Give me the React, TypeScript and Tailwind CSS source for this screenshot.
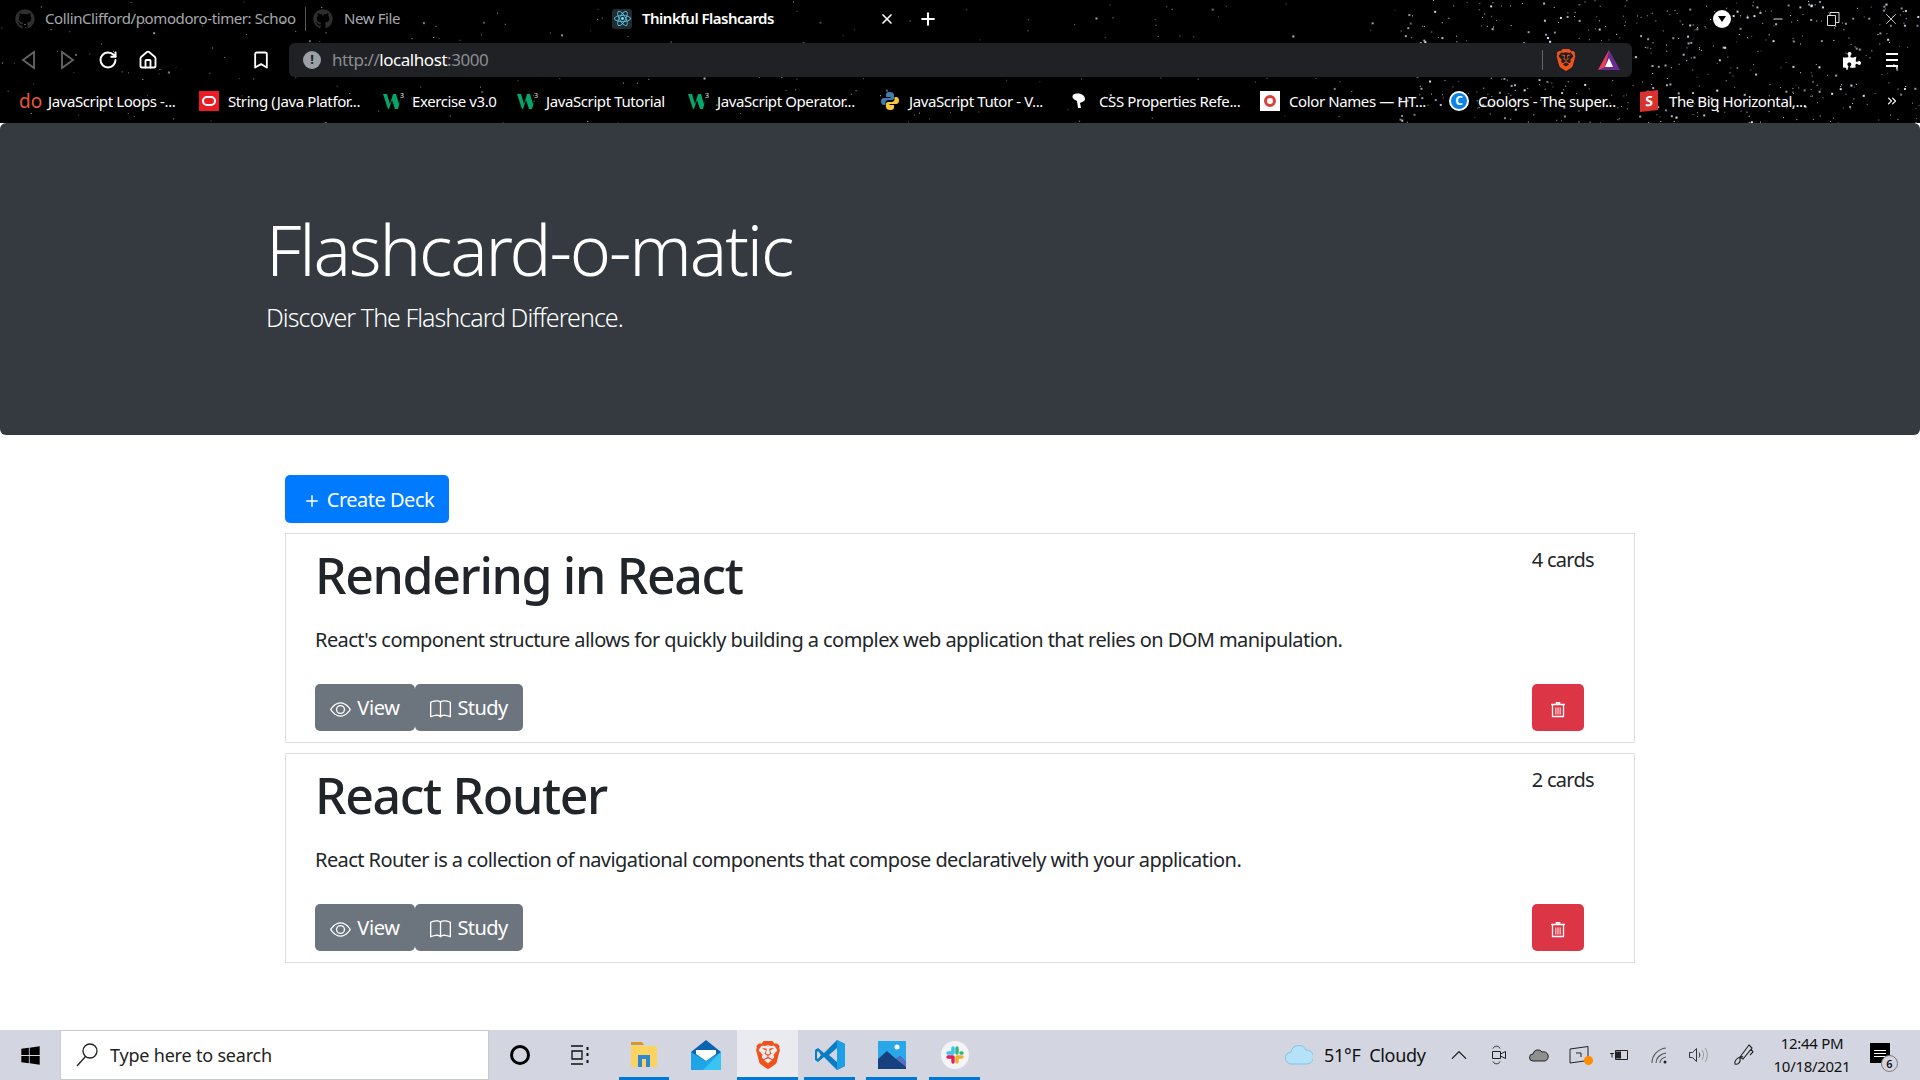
import { type ReactNode } from "react"
import { BsBook, BsEye, BsPlus, BsChevronUp } from "react-icons/bs"
import { FaGithub, FaReact, FaWindows, FaPuzzlePiece } from "react-icons/fa"
import { SiBrave } from "react-icons/si"
import { X, Plus, RotateCw, Home, Bookmark, Minus, ChevronsRight } from "lucide-react"

const FONT = "font-['Noto_Sans','Open_Sans',sans-serif]"

// 星空背景用的伪随机
function makeStars() {
  const out: { x: number; y: number; s: number; o: number }[] = []
  let seed = 1337
  const rnd = () => {
    seed = (seed * 16807) % 2147483647
    return seed / 2147483647
  }
  for (let i = 0; i < 760; i++) {
    // 右上角更密
    const dense = i % 5 < 3
    const x = dense ? 1400 + rnd() * 520 : rnd() * 1920
    const y = rnd() * 123
    out.push({ x, y, s: rnd() > (dense ? 0.65 : 0.85) ? 2 : 1, o: dense ? 0.5 + rnd() * 0.5 : 0.3 + rnd() * 0.5 })
  }
  return out
}
const STARS = makeStars()

function Stars() {
  return (
    <svg className="absolute inset-0 w-full h-full" viewBox="0 0 1920 123">
      {STARS.map((s, i) => (
        <rect key={i} x={s.x} y={s.y} width={s.s} height={s.s} fill="#e6edff" opacity={s.o} />
      ))}
    </svg>
  )
}

function BraveIcon({ size = 22 }: { size?: number }) {
  return (
    <span className="text-[#f1511b] flex">
      <SiBrave size={size} />
    </span>
  )
}

function W3Icon() {
  return (
    <svg width="22" height="18" viewBox="0 0 22 18">
      <path d="M0 2h4l3 10 3-10h3l3 10 3-10h0l-4 15h-3l-3-9-3 9H5z" fill="#04a66b" />
      <text x="17" y="6" fontSize="7" fill="#e5e7eb">3</text>
    </svg>
  )
}

function PythonIcon() {
  return (
    <svg width="20" height="20" viewBox="0 0 20 20">
      <path d="M10 1c-4 0-4 1.600-4 3v2h4.500v1H4c-2 0-3 1.500-3 3.500S2 14 4 14h1.500v-2.200C5.500 10 7 9 8.500 9h3.500c1.300 0 2-.8 2-2V4c0-2-2-3-4-3z" fill="#3f7cb0" />
      <path d="M10 19c4 0 4-1.600 4-3v-2H9.500v-1H16c2 0 3-1.500 3-3.500S18 6 16 6h-1.500v2.200C14.500 10 13 11 11.500 11H8c-1.300 0-2 .8-2 2v3c0 2 2 3 4 3z" fill="#f7c83c" />
    </svg>
  )
}

function Bm({ icon, label, cls }: { icon: ReactNode; label: string; cls: string }) {
  return (
    <div className={`flex items-center shrink-0 ${cls}`}>
      <span className="w-[29px] flex items-center shrink-0">{icon}</span>
      <span className="text-white text-[15px] tracking-[-0.4px] whitespace-nowrap">{label}</span>
    </div>
  )
}

function BrowserChrome() {
  return (
    <div className={`relative bg-black h-[123px] shrink-0 overflow-hidden ${FONT}`}>
      <Stars />
      <div className="relative flex flex-col h-full">
        {/* 标签栏 */}
        <div className="flex items-center h-[37px] pl-[15px] shrink-0">
          <FaGithub size={20} className="text-[#2e2e2e] shrink-0" />
          <span className="ml-[10px] w-[250px] whitespace-nowrap text-[15px] tracking-[-0.4px] text-[#a6a9ad]">
            CollinClifford/pomodoro-timer: Schoo
          </span>
          <div className="w-px h-[24px] bg-[#555] ml-[10px]" />
          <FaGithub size={20} className="text-[#2e2e2e] ml-[7px] shrink-0" />
          <span className="ml-[11px] w-[268px] text-[15px] tracking-[-0.4px] text-[#a6a9ad]">New File</span>
          <span className="w-[20px] h-[20px] rounded-[3px] bg-[#222b2f] flex items-center justify-center shrink-0">
            <FaReact size={17} className="text-[#61dafb]" />
          </span>
          <span className="ml-[10px] w-[237px] text-[15px] tracking-[-0.5px] font-semibold text-white whitespace-nowrap">
            Thinkful Flashcards
          </span>
          <X size={16} strokeWidth={2.5} className="text-white shrink-0" />
          <Plus size={20} strokeWidth={2.5} className="ml-[23px] text-white shrink-0" />
          <div className="flex-1" />
          <span className="w-[18px] h-[18px] rounded-full bg-white flex items-center justify-center">
            <span className="w-0 h-0 border-l-[4px] border-r-[4px] border-t-[6px] border-l-transparent border-r-transparent border-t-black" />
          </span>
          <Minus size={14} className="ml-[40px] text-[#ddd]" />
          <svg className="ml-[41px]" width="14" height="14" viewBox="0 0 14 14" fill="none" stroke="#ddd">
            <path d="M1.500 3.500h8v10h-8zM4 3.500V.5h9v10H9.500" />
          </svg>
          <X size={18} strokeWidth={1.2} className="ml-[42px] mr-[20px] text-[#ddd]" />
        </div>

        {/* 地址栏 */}
        <div className="flex items-center h-[43px] mt-[1px] shrink-0">
          <svg className="ml-[20px]" width="16" height="20" viewBox="0 0 16 20" fill="none" stroke="#666" strokeWidth="1.800">
            <path d="M14 2 3 10l11 8z" />
          </svg>
          <svg className="ml-[24px]" width="16" height="20" viewBox="0 0 16 20" fill="none" stroke="#666" strokeWidth="1.800">
            <path d="M2 2l11 8-11 8z" />
          </svg>
          <RotateCw size={20} strokeWidth={2.4} className="ml-[22px] text-white" />
          <Home size={20} strokeWidth={2.2} className="ml-[20px] text-white" />
          <Bookmark size={20} strokeWidth={2.2} className="ml-[93px] text-white" />
          <div className="ml-[18px] w-[1343px] h-[34px] rounded-[6px] bg-[#202124] flex items-center pl-[14px] pr-[11px]">
            <span className="w-[18px] h-[18px] rounded-full bg-[#9aa0a6] text-[#202124] text-[13px] font-bold flex items-center justify-center leading-none">
              !
            </span>
            <span className="ml-[11px] text-[17px] tracking-[-0.45px] text-[#8a8d91]">
              http://<span className="text-white">localhost</span>:3000
            </span>
            <div className="flex-1" />
            <div className="w-px h-[20px] bg-[#666]" />
            <span className="ml-[12px] flex">
              <BraveIcon />
            </span>
            <svg className="ml-[20px]" width="24" height="22" viewBox="0 0 24 22">
              <path d="M12 1 23 21H1z" fill="#6b2c91" />
              <path d="M12 1 1 21l7-3z" fill="#ef3e4f" />
              <path d="M12 9l4 9H8z" fill="#fff" />
            </svg>
          </div>
          <FaPuzzlePiece size={18} className="ml-[211px] text-white" />
          <svg className="ml-[24px]" width="14" height="18" viewBox="0 0 14 18" fill="#fff">
            <rect x="1" y="2" width="12" height="2" />
            <rect x="1" y="8" width="12" height="2" />
            <rect x="1" y="14" width="12" height="2" />
          </svg>
        </div>

        {/* 书签栏 */}
        <div className="flex items-center h-[40px] pl-[19px] shrink-0">
          <Bm cls="w-[180px]" label="JavaScript Loops -..." icon={<span className="text-[#e9573f] text-[19px] leading-none">do</span>} />
          <Bm
            cls="w-[184px]"
            label="String (Java Platfor..."
            icon={
              <span className="w-[20px] h-[20px] bg-[#ec1c24] flex items-center justify-center">
                <span className="w-[14px] h-[10px] rounded-[5px] border-2 border-white" />
              </span>
            }
          />
          <Bm cls="w-[134px]" label="Exercise v3.0" icon={<W3Icon />} />
          <Bm cls="w-[171px]" label="JavaScript Tutorial" icon={<W3Icon />} />
          <Bm cls="w-[192px]" label="JavaScript Operator..." icon={<W3Icon />} />
          <Bm cls="w-[190px]" label="JavaScript Tutor - V..." icon={<PythonIcon />} />
          <Bm
            cls="w-[190px]"
            label="CSS Properties Refe..."
            icon={
              <svg width="18" height="18" viewBox="0 0 18 18">
                <path d="M3 3c4-3 12-1 12 4 0 3-4 3-5 4l1 5H8L7 9C5 8 1 6 3 3z" fill="#fff" />
              </svg>
            }
          />
          <Bm
            cls="w-[189px]"
            label="Color Names — HT..."
            icon={
              <span className="w-[20px] h-[20px] bg-white flex items-center justify-center">
                <span className="w-[12px] h-[12px] rounded-full border-[3px] border-[#d8423a]" />
              </span>
            }
          />
          <Bm
            cls="w-[191px]"
            label="Coolors - The super..."
            icon={
              <span className="w-[20px] h-[20px] rounded-full bg-[#0a84e8] border-2 border-white flex items-center justify-center text-white text-[12px] font-bold leading-none">
                C
              </span>
            }
          />
          <Bm
            cls="w-[245px]"
            label="The Big Horizontal,..."
            icon={
              <span className="w-[18px] h-[20px] bg-[#d9322e] -skew-y-6 flex items-center justify-center text-white text-[14px] font-bold leading-none">
                S
              </span>
            }
          />
          <ChevronsRight size={14} className="text-white shrink-0" />
        </div>
      </div>
    </div>
  )
}

function TrashIcon() {
  return (
    <svg width="20" height="20" viewBox="0 0 20 20" fill="none" stroke="#fff" strokeWidth="1.300">
      <path d="M3 5.500h14M8.500 5V3.800h3V5" strokeWidth="1.600" />
      <path d="M4.500 6v11.500h11V6" />
      <path d="M7.800 8.500v7M10 8.500v7M12.200 8.500v7" strokeOpacity=".75" />
    </svg>
  )
}

function DeckCard({ title, desc, count }: { title: string; desc: string; count: string }) {
  return (
    <div className="h-[210px] border border-[#dfdfdf] pl-[29px] pr-[50px] flex flex-col">
      <div className="flex justify-between">
        <h2 className="text-[50px] leading-[60px] font-medium text-[#212529] mt-[11px] tracking-[-1.35px]">{title}</h2>
        <span className="text-[20px] leading-[30px] text-[#212529] mt-[11px] mr-[-10px] tracking-[-0.7px]">{count}</span>
      </div>
      <p className="text-[20px] leading-[30px] text-[#212529] mt-[20px] tracking-[-0.56px]">{desc}</p>
      <div className="flex justify-between mt-[29px]">
        <div className="flex">
          <button className="h-[47px] w-[100px] rounded-[5px] bg-[#6c757d] text-white text-[20px] flex items-center justify-center gap-[6px] tracking-[-0.3px] pt-[1px]">
            <BsEye size={21} className="mt-[3px]" />
            View
          </button>
          <button className="h-[47px] w-[108px] rounded-[5px] bg-[#6c757d] text-white text-[20px] flex items-center justify-center gap-[6px] tracking-[-0.6px] pt-[1px]">
            <BsBook size={21} className="mt-[3px]" />
            Study
          </button>
        </div>
        <button className="h-[47px] w-[52px] rounded-[5px] bg-[#dc3545] flex items-center justify-center pt-[2px]">
          <TrashIcon />
        </button>
      </div>
    </div>
  )
}

function Page() {
  return (
    <div className={`flex-1 min-h-0 bg-white ${FONT}`}>
      <div className="h-[312px] rounded-[6px] bg-[#343a40] pt-[84px] pl-[266px] text-white">
        <h1 className="text-[70px] leading-[84px] font-light tracking-[-2.15px]">Flashcard-o-matic</h1>
        <p className="text-[25px] leading-[37px] font-light mt-[8px] tracking-[-0.95px]">Discover The Flashcard Difference.</p>
      </div>
      <div className="w-[1350px] ml-[285px] mt-[40px]">
        <button className="h-[48px] w-[164px] rounded-[5px] bg-[#007bff] text-white text-[20px] flex items-center justify-center tracking-[-0.5px] pt-[1px]">
          <BsPlus size={24} className="mt-[3px] mr-[3px]" />
          Create Deck
        </button>
        <div className="mt-[10px] flex flex-col gap-[10px]">
          <DeckCard
            title="Rendering in React"
            count="4 cards"
            desc="React's component structure allows for quickly building a complex web application that relies on DOM manipulation."
          />
          <DeckCard
            title="React Router"
            count="2 cards"
            desc="React Router is a collection of navigational components that compose declaratively with your application."
          />
        </div>
      </div>
    </div>
  )
}

function TaskSlot({ cls, active, line, children }: { cls: string; active?: boolean; line?: boolean; children: ReactNode }) {
  return (
    <div className={`h-full flex items-center justify-center relative shrink-0 ${cls} ${active ? "bg-[#eaebf1]" : ""}`}>
      {children}
      {line && <span className="absolute left-0 right-0 bottom-0 h-[3px] bg-[#0078d7]" />}
    </div>
  )
}

function Taskbar() {
  return (
    <div className={`h-[50px] shrink-0 bg-[#d3d6e1] flex items-center ${FONT}`}>
      <div className="w-[60px] flex justify-center">
        <FaWindows size={21} className="text-black" />
      </div>
      <div className="w-[429px] h-full bg-white border border-[#c9cad0] flex items-center pl-[14px] text-[#222]">
        <svg width="24" height="26" viewBox="0 0 24 26" fill="none" stroke="#222" strokeWidth="1.300">
          <circle cx="15" cy="9" r="7" />
          <path d="M10.500 14.500 2 24" />
        </svg>
        <span className="ml-[11px] text-[18px] tracking-[-0.2px]">Type here to search</span>
      </div>
      <div className="w-[62px] flex justify-center">
        <span className="w-[20px] h-[20px] rounded-full border-[3px] border-black" />
      </div>
      <div className="w-[58px] flex justify-center">
        <svg width="22" height="20" viewBox="0 0 22 20" fill="none" stroke="#111" strokeWidth="1.300">
          <path d="M2 1h12M3 6h10v8H3zM2 19h12" />
          <path d="M18.500 2v3M18.500 8v3M18.500 15v3" strokeWidth="2" />
        </svg>
      </div>
      <div className="w-[10px]" />
      <TaskSlot cls="w-[50px]" line>
        <svg width="28" height="28" viewBox="0 0 28 28">
          <path d="M1 1h11l2 3H1z" fill="#d99a1c" />
          <path d="M1 5h26v21H1z" fill="#fbd35f" />
          <path d="M8 26V14h12v12h-4v-8h-4v8z" fill="#2d87d4" />
        </svg>
      </TaskSlot>
      <div className="w-[21px]" />
      <div className="w-[32px] flex justify-center">
        <svg width="30" height="30" viewBox="0 0 30 30">
          <path d="M15 0 30 12v18H0V12z" fill="#0a63b0" />
          <path d="M5 10h20v4l-10 7-10-7z" fill="#fff" />
          <path d="M0 12l15 9 15-9v18H0z" fill="#1ea5e8" />
          <path d="M30 12v18H12z" fill="#3ac4f2" />
        </svg>
      </div>
      <div className="w-[15px]" />
      <TaskSlot cls="w-[61px]" active line>
        <BraveIcon size={28} />
      </TaskSlot>
      <div className="w-[6px]" />
      <TaskSlot cls="w-[51px]" line>
        <svg width="30" height="30" viewBox="0 0 30 30">
          <path d="M22 0 30 4v22l-8 4-13-13-6 5-3-2v-10l3-2 6 5z" fill="#0a7cc4" />
          <path d="M22 0 30 4v22l-8 4z" fill="#1d9fe8" />
          <path d="M22 8l-8 7 8 7z" fill="#d3d6e1" />
          <path d="M3 11l3 4-3 4-1-1v-6z" fill="#d3d6e1" />
        </svg>
      </TaskSlot>
      <div className="w-[11px]" />
      <TaskSlot cls="w-[51px]" line>
        <svg width="28" height="28" viewBox="0 0 28 28">
          <rect width="28" height="28" fill="#28a8e8" />
          <path d="M0 28V18l9-8 9 8 4-3 6 6v7z" fill="#17407e" />
          <path d="M18 18l4-3 6 6v5z" fill="#5a6cc4" />
          <circle cx="19" cy="6" r="2.500" fill="#fff" />
        </svg>
      </TaskSlot>
      <div className="w-[12px]" />
      <TaskSlot cls="w-[51px]" line>
        <span className="w-[28px] h-[28px] rounded-full bg-[#f4f4f6] flex items-center justify-center">
          <svg width="18" height="18" viewBox="0 0 18 18" strokeWidth="3.400" strokeLinecap="round" fill="none">
            <path d="M7 2v5M2 7h5" stroke="#36c5f0" />
            <path d="M11 2v5M16 7h-1" stroke="#2eb67d" />
            <path d="M11 16v-5M16 11h-5" stroke="#ecb22e" />
            <path d="M7 16v-5M2 11h5" stroke="#e01e5a" />
          </svg>
        </span>
      </TaskSlot>
      <div className="flex-1" />

      {/* 托盘区 */}
      <div className="flex items-center h-full text-[#111]">
        <svg width="28" height="22" viewBox="0 0 28 22">
          <path d="M7 20a6 6 0 0 1-1-12 8 8 0 0 1 15-2 7 7 0 0 1 1 14z" fill="#b5e2f9" stroke="#7fc4ea" />
        </svg>
        <span className="ml-[11px] text-[18px] tracking-[-0.3px] whitespace-pre w-[115px]">51°F  Cloudy</span>
        <span className="w-[40px] flex justify-center">
          <BsChevronUp size={18} />
        </span>
        <span className="w-[40px] flex justify-center">
          <svg width="16" height="22" viewBox="0 0 16 22" fill="none" stroke="#222">
            <path d="M1.500 7.500h8v7h-8zM9.500 10l5-2.500v7L9.500 12M2 4.500c1-3 6-3 7 0M2 17.500c1 3 6 3 7 0" />
          </svg>
        </span>
        <span className="w-[40px] flex justify-center">
          <svg width="20" height="14" viewBox="0 0 20 14">
            <path d="M4 13a3.500 3.500 0 0 1 0-7 5 5 0 0 1 9-2 4.500 4.500 0 0 1 3 9z" fill="#8f8f8f" stroke="#222" />
          </svg>
        </span>
        <span className="w-[40px] flex justify-center relative">
          <svg width="20" height="18" viewBox="0 0 20 18" fill="none" stroke="#222">
            <path d="M1 3 19 .5v14L1 17zM7 7h5v4" />
          </svg>
          <span className="absolute right-[6px] bottom-[-1px] w-[9px] h-[9px] rounded-full bg-[#ff8c00]" />
        </span>
        <span className="w-[40px] flex justify-center">
          <svg width="20" height="14" viewBox="0 0 20 14" fill="none" stroke="#222">
            <path d="M6.500 2.500h12v9h-12zM1 5.500h4M3 5.500v4" />
            <rect x="7.500" y="4" width="4" height="6" fill="#222" />
          </svg>
        </span>
        <span className="w-[40px] flex justify-center">
          <svg width="18" height="18" viewBox="0 0 18 18" fill="none" stroke="#555" strokeWidth="1.100">
            <path d="M2 17C2 9 8 3 16 2M6 17c0-5 4-9 10-10M10 17c0-3 2-5 6-6" />
            <circle cx="15" cy="16" r="1.500" fill="#222" stroke="none" />
          </svg>
        </span>
        <span className="w-[38px] flex justify-center">
          <svg width="20" height="18" viewBox="0 0 20 18" fill="none" stroke="#333">
            <path d="M1.500 6.500h3l4-4v13l-4-4h-3z" />
            <path d="M11 6.500c1 1.500 1 3.500 0 5" />
            <path d="M14 4c2 3 2 7 0 10M17 2c3 4 3 10 0 14" stroke="#999" />
          </svg>
        </span>
        <span className="w-[53px] flex justify-center">
          <svg width="24" height="24" viewBox="0 0 24 24" fill="none" stroke="#222" strokeWidth="1.100">
            <path d="M17 2l3 3-9 11-3-2zM8 14c-3 1-6 4-5 7 2 1 6-1 5-5-1-2 2-3 3-2M19 6l2 3-3 3" />
          </svg>
        </span>
        <div className="w-[84px] flex flex-col items-center text-[15px] leading-[23px] tracking-[-0.3px]">
          <span>12:44 PM</span>
          <span>10/18/2021</span>
        </div>
        <span className="w-[66px] flex justify-start pl-[16px] relative">
          <span className="w-[20px] h-[20px] bg-black flex flex-col justify-center gap-[2px] px-[4px] -mt-[4px]">
            <span className="h-px bg-white" />
            <span className="h-px bg-white" />
            <span className="h-px bg-white" />
          </span>
          <span className="absolute left-[27px] bottom-[-9px] w-[17px] h-[17px] rounded-full bg-[#d3d6e1] border border-[#777] text-[11px] font-semibold flex items-center justify-center leading-none">
            6
          </span>
        </span>
      </div>
    </div>
  )
}

export default function App() {
  return (
    <div className="w-[1920px] h-[1080px] overflow-hidden flex flex-col">
      <BrowserChrome />
      <Page />
      <Taskbar />
    </div>
  )
}
